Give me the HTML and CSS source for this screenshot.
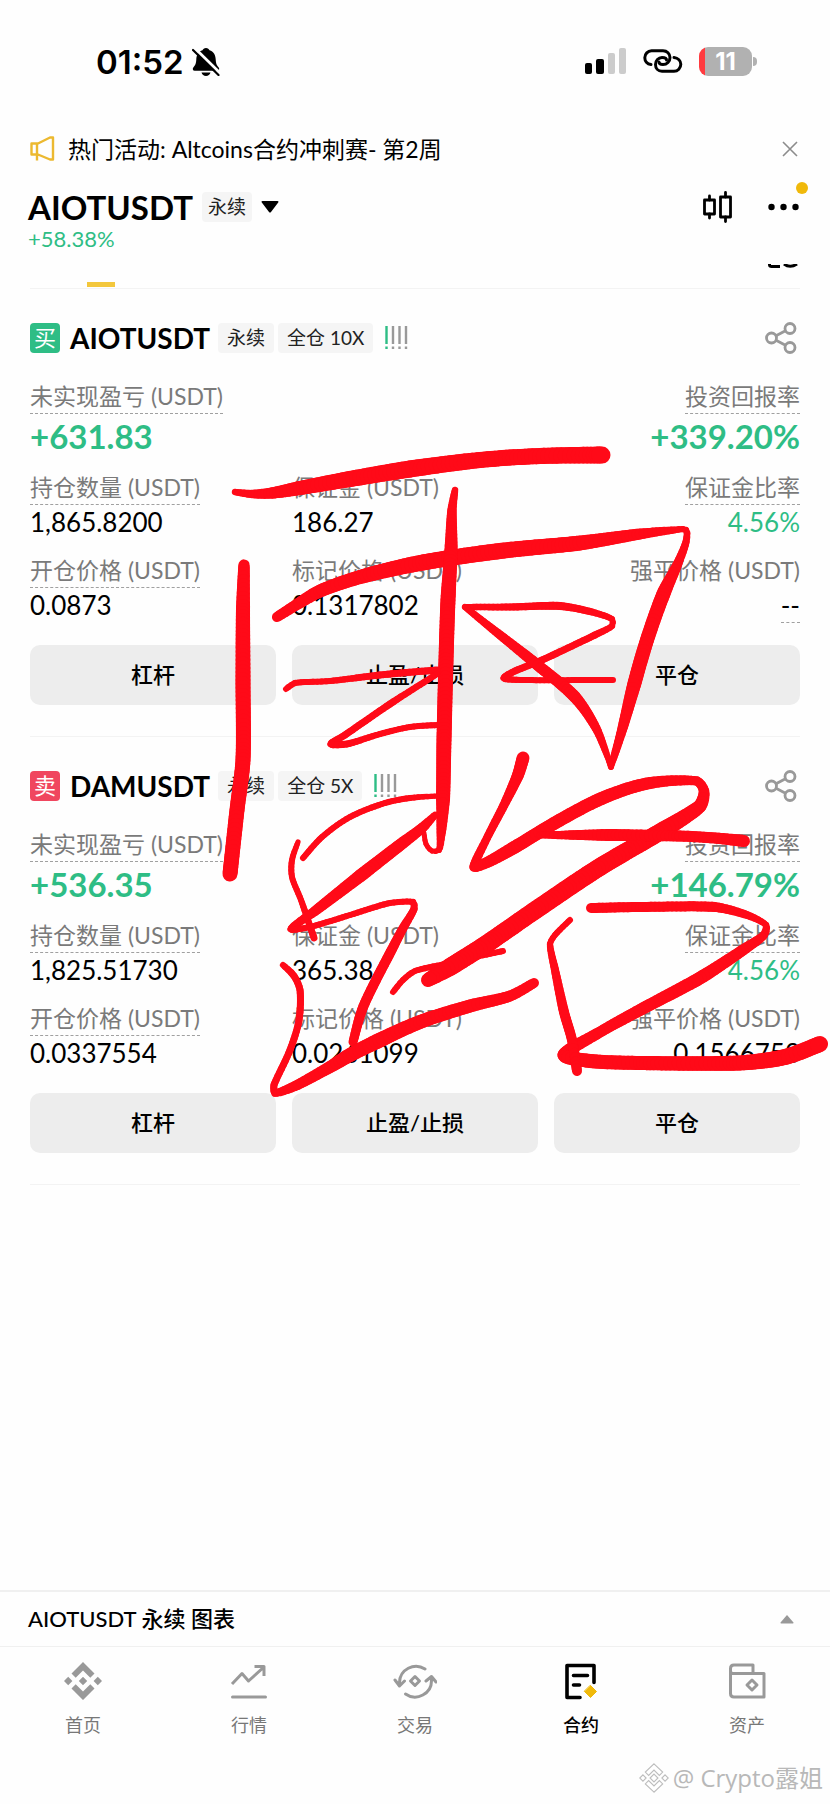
FILE: index.html
```html
<!DOCTYPE html>
<html lang="zh-CN">
<head>
<meta charset="utf-8">
<meta name="viewport" content="width=device-width, initial-scale=1">
<title>AIOTUSDT 永续</title>
<link rel="stylesheet" href="styles.css">
</head>
<body>
<div class="screen">
  <div class="status">
    <div class="status-time">
      <span>01:52</span>
      <svg width="28" height="28" viewBox="0 0 28 28" aria-hidden="true">
        <path d="M14 0c1.800 0 3 1 3.500 2.300 4 1.400 6 4.500 6.200 9 .2 5 1.300 6.300 3 8.200 1 1.200.6 3.300-1.400 3.300H2.700c-2 0-2.400-2.100-1.400-3.300 1.700-1.900 2.800-3.200 3-8.200.2-4.500 2.200-7.600 6.200-9C11 1 12.200 0 14 0zM9.500 24.500h9c-.6 2.200-2.300 3.500-4.500 3.500s-3.900-1.300-4.500-3.500z"/>
        <path d="M2.500 0L28 25" stroke="#fff" stroke-width="3"/>
        <path d="M1 2L26.500 27" stroke="#000" stroke-width="2.200" stroke-linecap="round"/>
      </svg>
    </div>
    <div class="status-icons">
      <svg width="42" height="28" viewBox="0 0 42 28" aria-hidden="true">
        <rect x="0" y="16" width="7" height="11" rx="2"/><rect x="11" y="12" width="8" height="15" rx="2"/>
        <rect x="23" y="6" width="7" height="21" rx="2" fill="#ccc"/><rect x="34" y="1" width="7" height="26" rx="2" fill="#ccc"/>
      </svg>
      <svg width="40" height="24" viewBox="0 0 40 24" fill="none" stroke="#000" stroke-width="3" stroke-linecap="round" aria-hidden="true">
        <path d="M8 15.500C4 15 1.800 12 1.800 8.800 1.800 5 4.800 1.800 8.500 1.800H20c4 0 7 3 7 6.800s-3 7-7 7c-2.200 0-4-1-4-2.600"/>
        <path d="M31 8.500c4 .5 6.800 3.500 6.800 6.800 0 3.800-3 7-6.800 7H19c-4 0-6.500-3-6.500-6.800s3-7 6.500-7c2.500 0 4.500.8 4.500 2.500"/>
      </svg>
      <div class="battery"><span>11</span></div>
    </div>
  </div>

  <div class="notice">
    <svg width="26" height="26" viewBox="0 0 26 26" fill="none" stroke="#ecb930" stroke-width="2.400" stroke-linejoin="round" aria-hidden="true">
      <path d="M1.500 7.500h6.500L20 1.500h3v22h-3L8 18.500H1.500zM7 7.500v17"/>
    </svg>
    <p>热门活动: Altcoins合约冲刺赛- 第2周</p>
    <button class="icon-btn" type="button" aria-label="关闭">
      <svg width="16" height="16" viewBox="0 0 16 16" stroke="#8c8c8c" stroke-width="1.600"><path d="M1 1l14 14M15 1L1 15"/></svg>
    </button>
  </div>

  <header class="ticker">
    <div>
      <div class="ticker-name">
        <h1>AIOTUSDT</h1><span class="tag tag-large">永续</span>
        <button class="icon-btn" type="button" aria-label="选择合约">
          <svg width="18" height="12" viewBox="0 0 18 12"><path d="M1.500 0h15c1 0 1.300.9.700 1.600L10 11c-.6.700-1.400.7-2 0L.8 1.600C.2.900.5 0 1.500 0z"/></svg>
        </button>
      </div>
      <p class="ticker-change">+58.38%</p>
    </div>
    <div class="ticker-tools">
      <button class="icon-btn" type="button" aria-label="K线图">
        <svg width="30" height="32" viewBox="0 0 30 32" fill="none" stroke="#000" stroke-width="2.800" stroke-linecap="round" stroke-linejoin="round"><rect x="1.500" y="9" width="10" height="14"/><path d="M6.500 5v4M6.500 23v4M22.500 1.500V6M22.500 26v4.500"/><rect x="17.500" y="6" width="10" height="20"/></svg>
      </button>
      <button class="icon-btn more" type="button" aria-label="更多">
        <svg width="31" height="8" viewBox="0 0 31 8"><circle cx="3.500" cy="4" r="3.200"/><circle cx="15.500" cy="4" r="3.200"/><circle cx="27.500" cy="4" r="3.200"/></svg>
      </button>
    </div>
  </header>
  <div class="tabs">
    <svg class="tabs-icon" width="30" height="5" viewBox="0 0 30 5" fill="none" stroke="#000" stroke-width="3" aria-hidden="true"><path d="M1.500 0v.8q0 1.700 2 1.700H12M16 0q6 4.500 13 0"/></svg>
    <div class="tabs-mark"></div>
  </div>

  <main>
    <section class="card">
      <div class="card-head">
        <span class="side buy">买</span><h2>AIOTUSDT</h2><span class="tag">永续</span><span class="tag">全仓 10X</span>
        <svg class="risk" width="23" height="24" viewBox="0 0 23 24" stroke-width="2.400" stroke="#999" aria-hidden="true"><path stroke="#2ebd85" d="M1.500 0v18M1.500 20.500v2.500"/><path d="M8 0v18M8 20.500v2.500M14.500 0v18M14.500 20.500v2.500M21 0v18M21 20.500v2.500"/></svg>
        <button class="icon-btn share" type="button" aria-label="分享"><svg width="32" height="32" viewBox="0 0 32 32" fill="none" stroke="#999" stroke-width="2.800"><circle cx="6.500" cy="16" r="5"/><circle cx="25" cy="6.500" r="5"/><circle cx="25" cy="25.500" r="5"/><path d="M11 13.700l9.500-5M11 18.300l9.500 5"/></svg></button>
      </div>
      <div class="row row-big">
        <div><p class="label dotted">未实现盈亏 (USDT)</p><p class="value">+631.83</p></div>
        <div></div>
        <div><p class="label dotted">投资回报率</p><p class="value">+339.20%</p></div>
      </div>
      <div class="row">
        <div><p class="label dotted">持仓数量 (USDT)</p><p class="value">1,865.8200</p></div>
        <div><p class="label">保证金 (USDT)</p><p class="value">186.27</p></div>
        <div><p class="label dotted">保证金比率</p><p class="value up">4.56%</p></div>
      </div>
      <div class="row">
        <div><p class="label dotted">开仓价格 (USDT)</p><p class="value">0.0873</p></div>
        <div><p class="label">标记价格 (USDT)</p><p class="value">0.1317802</p></div>
        <div><p class="label">强平价格 (USDT)</p><p class="value dotted">--</p></div>
      </div>
      <div class="actions"><button type="button">杠杆</button><button type="button">止盈/止损</button><button type="button">平仓</button></div>
    </section>

    <section class="card">
      <div class="card-head">
        <span class="side sell">卖</span><h2>DAMUSDT</h2><span class="tag">永续</span><span class="tag">全仓 5X</span>
        <svg class="risk" width="23" height="24" viewBox="0 0 23 24" stroke-width="2.400" stroke="#999" aria-hidden="true"><path stroke="#2ebd85" d="M1.500 0v18M1.500 20.500v2.500"/><path d="M8 0v18M8 20.500v2.500M14.500 0v18M14.500 20.500v2.500M21 0v18M21 20.500v2.500"/></svg>
        <button class="icon-btn share" type="button" aria-label="分享"><svg width="32" height="32" viewBox="0 0 32 32" fill="none" stroke="#999" stroke-width="2.800"><circle cx="6.500" cy="16" r="5"/><circle cx="25" cy="6.500" r="5"/><circle cx="25" cy="25.500" r="5"/><path d="M11 13.700l9.500-5M11 18.300l9.500 5"/></svg></button>
      </div>
      <div class="row row-big">
        <div><p class="label dotted">未实现盈亏 (USDT)</p><p class="value">+536.35</p></div>
        <div></div>
        <div><p class="label dotted">投资回报率</p><p class="value">+146.79%</p></div>
      </div>
      <div class="row">
        <div><p class="label dotted">持仓数量 (USDT)</p><p class="value">1,825.51730</p></div>
        <div><p class="label">保证金 (USDT)</p><p class="value">365.38</p></div>
        <div><p class="label dotted">保证金比率</p><p class="value up">4.56%</p></div>
      </div>
      <div class="row">
        <div><p class="label dotted">开仓价格 (USDT)</p><p class="value">0.0337554</p></div>
        <div><p class="label">标记价格 (USDT)</p><p class="value">0.0261099</p></div>
        <div><p class="label">强平价格 (USDT)</p><p class="value">0.1566753</p></div>
      </div>
      <div class="actions"><button type="button">杠杆</button><button type="button">止盈/止损</button><button type="button">平仓</button></div>
    </section>
  </main>

  <footer>
    <button class="chart-bar" type="button">
      <span>AIOTUSDT 永续 图表</span>
      <svg width="14" height="9" viewBox="0 0 14 9" fill="#999" aria-hidden="true"><path d="M7 0l6.500 7.500q.3 1-.8 1H1.300q-1.100 0-.8-1z"/></svg>
    </button>
    <nav>
      <a href="#home">
        <svg width="38" height="38" viewBox="0 0 38 38" fill="#999" aria-hidden="true"><path d="M19 0l11.500 11.500-4.200 4.200L19 8.400l-7.300 7.300-4.200-4.200zM19 38L7.500 26.500l4.200-4.200 7.300 7.300 7.300-7.300 4.200 4.200zM4.200 14.800L8.400 19l-4.200 4.200L0 19zM33.800 14.800L38 19l-4.200 4.200-4.200-4.200zM19 14.800l4.200 4.200-4.200 4.200-4.200-4.200z"/></svg>
        首页</a>
      <a href="#markets">
        <svg width="38" height="38" viewBox="0 0 38 38" fill="none" stroke="#999" stroke-width="3" aria-hidden="true"><path stroke-linecap="round" d="M2.500 35h33"/><path stroke-linejoin="round" d="M2 22l10-10.500 6.500 7.500L34 5M24.500 4.500H34V14"/></svg>
        行情</a>
      <a href="#trade">
        <svg width="44" height="38" viewBox="0 0 44 38" fill="none" stroke="#999" stroke-width="3" stroke-linecap="round" stroke-linejoin="round" aria-hidden="true"><path d="M32 7A16.500 16.500 0 0 0 6.500 20.500M2 18l4.500 6 5-5M12.500 32A16.500 16.500 0 0 0 38.500 18M33 19l5.500-4.500L43 20"/><path d="M22 14.500l4.500 4.500-4.500 4.500-4.500-4.500z"/></svg>
        交易</a>
      <a href="#futures" class="current" aria-current="page">
        <svg width="38" height="38" viewBox="0 0 38 38" fill="none" stroke="#000" stroke-width="3.600" stroke-linecap="round" stroke-linejoin="round" aria-hidden="true"><path d="M18 35.500H5V3.500h27v17M11.500 13.500h14M11.500 23h6"/><path d="M28.500 23.500l6 6-6 6-6-6z" fill="#f0b90b" stroke="#f0b90b" stroke-width="1"/></svg>
        合约</a>
      <a href="#assets">
        <svg width="38" height="38" viewBox="0 0 38 38" fill="none" stroke="#999" stroke-width="3" stroke-linejoin="round" aria-hidden="true"><path d="M2.500 11V6.500q0-3.500 3.500-3.500H25v8M2.500 9q0 2.500 2.500 2.500h31V35H6q-3.500 0-3.500-3.500z"/><path d="M24 18l5 5-5 5-5-5z"/></svg>
        资产</a>
    </nav>
    <div class="credit">
      <svg width="30" height="30" viewBox="0 0 38 38" fill="#fff" stroke="#bdbdbd" stroke-width="1.400" aria-hidden="true"><path d="M19 1l11 10.500-4.200 4.200L19 8.900l-6.800 6.800L8 11.500zM19 37L8 26.500l4.200-4.200 6.800 6.800 6.800-6.800 4.200 4.200zM5 15l4 4-4 4-4-4zM33 15l4 4-4 4-4-4zM19 14l5 5-5 5-5-5z"/></svg>
      <span>@ Crypto露姐</span>
    </div>
  </footer>
  <svg class="ink" viewBox="0 0 830 1804" aria-hidden="true"></svg>
</div>
<script src="ink.js"></script>
</body>
</html>
```

FILE: styles.css
```css
* { box-sizing: border-box; }
body {
  margin: 0;
  background: #fefefe;
  color: #000;
  font-family: Lato, "Noto Sans CJK SC", sans-serif;
  font-size: 22px;
  line-height: 30px;
}
h1, h2, p { margin: 0; }
button { font: inherit; color: inherit; border: 0; padding: 0; cursor: pointer; }
svg { display: block; flex: none; }
.icon-btn { background: none; }

.screen { position: relative; display: flex; flex-direction: column; min-height: 100vh; }
.ink { position: absolute; top: 0; left: 0; width: 100%; pointer-events: none; stroke: #ff0a18; stroke-linecap: round; }

.status { display: flex; justify-content: space-between; padding: 42px 78px 0 96px; }
.status-time { display: flex; align-items: center; gap: 8px; height: 40px; font: 600 33px/40px Inter, sans-serif; }
.status-icons { display: flex; align-items: center; gap: 16px; height: 38px; }
.battery {
  position: relative;
  width: 53px;
  height: 29px;
  border-radius: 9px;
  background: linear-gradient(90deg, #ff3b3f 6px, #b1b1b1 6px);
  color: #fff;
  font: 700 24px/29px Inter, sans-serif;
  text-align: center;
}
.battery::after { content: ""; position: absolute; left: 54px; top: 10px; width: 4px; height: 9px; border-radius: 0 4px 4px 0; background: #b1b1b1; }

.notice { display: flex; align-items: center; gap: 12px; padding: 52px 32px 0 30px; }
.notice p { flex: 1; font-size: 23px; }

.ticker { display: flex; justify-content: space-between; padding: 26px 31px 0 28px; }
.ticker-name { display: flex; align-items: center; gap: 9px; height: 34px; }
.ticker-name h1 { font-size: 33px; line-height: 34px; }
.ticker-change { font-size: 22px; line-height: 30px; color: #2ebd85; }
.ticker-tools { display: flex; align-items: center; gap: 35px; height: 34px; }
.more { position: relative; }
.more::after { content: ""; position: absolute; right: -9px; top: -21px; width: 12px; height: 12px; border-radius: 50%; background: #f0b90b; }
.tag { padding: 0 9px; border-radius: 4px; background: #f5f5f5; color: #222; font-size: 19px; line-height: 30px; white-space: nowrap; }
.tag-large { padding: 0 6px; }

.tabs { margin: 10px 30px 0; border-bottom: 1px solid #f3f3f3; }
.tabs-icon { margin-left: auto; margin-right: 2px; }
.tabs-mark { width: 28px; height: 5px; margin: 13px 0 1px 57px; background: #f3c73c; }

.card { margin: 0 30px; padding: 34px 0 31px; border-bottom: 1px solid #f3f3f3; }
.card-head { display: flex; align-items: center; gap: 4px; height: 30px; }
.side { width: 30px; border-radius: 4px; color: #fff; text-align: center; }
.buy { background: #2ebd85; }
.sell { background: #f0465f; }
.card-head h2 { margin: 0 4px 0 6px; font-size: 28px; line-height: 30px; }
.risk { margin-left: 8px; }
.share { margin-left: auto; margin-right: 3px; }

.row { display: grid; grid-template-columns: repeat(3, 1fr); column-gap: 16px; margin-top: 18px; }
.row > div { display: flex; flex-direction: column; align-items: flex-start; gap: 2px; }
.row > div:last-child { align-items: flex-end; }
.label { color: #7a7a7a; height: 33px; font-size: 23px; white-space: nowrap; }
.value { font-size: 26px; }
.dotted { padding-bottom: 2px; border-bottom: 1px dashed #a0a0a0; }
.up, .row-big .value { color: #2ebd85; }
.row-big { margin: 28px 0 18px; }
.row-big > div { gap: 4px; }
.row-big .value { font-size: 33px; line-height: 36px; font-weight: 700; }

.actions { display: grid; grid-template-columns: repeat(3, 1fr); gap: 16px; margin-top: 25px; }
.actions button { height: 60px; border-radius: 10px; background: #ededed; font-weight: 500; }
.row:has(+ .actions) { height: 65px; }

footer { margin-top: auto; }
.chart-bar {
  display: flex;
  align-items: center;
  justify-content: space-between;
  width: 100%;
  height: 56px;
  padding: 0 36px 0 28px;
  border-top: 2px solid #f0f0f0;
  background: #fefefe;
  font-weight: 500;
}
nav { display: grid; grid-template-columns: repeat(5, 1fr); padding-top: 15px; border-top: 1px solid #f0f0f0; }
nav a { display: flex; flex-direction: column; align-items: center; gap: 10px; color: #777; font-size: 18px; line-height: 30px; text-decoration: none; }
nav .current { color: #000; font-weight: 500; }
.credit { display: flex; align-items: center; justify-content: flex-end; gap: 4px; padding: 22px 7px 11px 0; color: #b8b8b8; font: 24px/31px "Open Sans", "Noto Sans CJK SC", sans-serif; }
```

FILE: ink.js
```js
// Each brush stroke is a list of x, y, width samples.
const strokes = [
  [[235,492,5],[252,494,7],[272,493,10],[300,488,13],[350,479,15],[410,469,16],[480,460,15],[540,456,15],[602,455,16]],
  [[244,565,10],[243,610,13],[243,680,14],[243,760,14],[237,810,14],[230,874,14]],
  [[277,617,9],[296,605,10],[320,591,12],[360,577,13],[420,563,15],[500,551,15],[580,543,14],[640,534,10],[674,530,6],[686,530,5],[686,542,6],[678,563,8],[663,595,13],[647,640,13],[634,685,13],[622,730,9],[613,760,6],[611,767,5]],
  [[455,490,5],[452,510,8],[451,550,12],[448,600,14],[446,660,14],[444,740,14],[443,800,13],[441,835,8],[439,850,5],[432,851,4],[426,844,4],[424,833,4]],
  [[465,607,5],[510,607,6],[560,606,7],[592,612,6],[612,619,5],[612,626,5],[595,635,6],[540,661,6],[515,671,6],[504,678,6],[520,680,5],[613,680,5]],
  [[465,607,5],[490,627,7],[535,663,10],[575,697,11],[596,728,8],[608,758,5],[611,767,5]],
  [[286,689,5],[295,683,5],[330,681,5],[380,675,6],[437,670,6]],
  [[437,674,5],[390,704,6],[345,735,6],[331,744,6],[347,744,6],[380,734,5],[410,727,5],[437,725,5]],
  [[303,858,5],[322,837,5],[350,817,5],[385,803,5],[410,798,5],[437,796,4]],
  [[298,842,4],[292,860,5],[292,877,5],[301,900,5],[314,938,6]],
  [[435,815,5],[422,828,9],[400,845,11],[360,876,12],[315,911,9],[291,929,6],[310,927,5],[350,915,5],[390,903,5],[413,902,5],[414,909,6],[402,930,8],[389,955,9],[376,980,9],[362,1010,9],[353,1042,8]],
  [[283,965,5],[294,976,6],[300,990,6],[299,1020,6],[290,1050,6],[274,1085,6],[275,1093,6],[295,1086,9],[330,1067,11],[350,1055,13],[380,1040,14],[420,1022,13],[470,1006,12],[510,996,10],[534,983,9]],
  [[393,992,5],[403,980,5],[415,971,5],[445,964,5],[475,957,5],[503,951,5]],
  [[523,758,12],[518,775,11],[504,805,8],[487,838,7],[474,867,8],[488,862,10],[515,847,12],[560,820,12],[605,797,12],[650,783,11],[697,781,8],[704,791,9],[700,806,12],[660,832,16],[600,867,17],[540,907,17],[485,945,17],[450,967,17],[428,980,13]],
  [[540,835,5],[570,835,8],[610,835,11],[680,836,10],[715,838,10],[744,841,11]],
  [[591,908,9],[640,907,9],[715,907,9],[747,915,7],[766,925,5],[764,935,7],[743,950,10],[700,978,12],[640,1010,11],[600,1032,10],[564,1055,12],[590,1061,13],[640,1063,13],[740,1063,14],[785,1057,15],[820,1044,15]],
  [[570,920,5],[555,935,5],[550,944,5],[555,970,7],[564,1012,9],[572,1040,9],[577,1071,9]]
];

const ink = document.querySelector('.ink');
const ns = 'http://www.w3.org/2000/svg';
const curve = (a, b, c, d, t) =>
  (2 * b + (c - a) * t + (2 * a - 5 * b + 4 * c - d) * t * t + (3 * b - a - 3 * c + d) * t * t * t) / 2;

for (const s of strokes) {
  let last = s[0];
  for (let i = 0; i < s.length - 1; i++) {
    const a = s[Math.max(i - 1, 0)], b = s[i], c = s[i + 1], d = s[Math.min(i + 2, s.length - 1)];
    const span = Math.hypot(c[0] - b[0], c[1] - b[1]);
    // Long neighbours are pulled in so that tight corners do not overshoot.
    const near = (p, q) => {
      const k = Math.min(1, span / (Math.hypot(p[0] - q[0], p[1] - q[1]) || 1));
      return [q[0] + (p[0] - q[0]) * k, q[1] + (p[1] - q[1]) * k];
    };
    const a2 = near(a, b), d2 = near(d, c);
    const steps = Math.max(2, Math.ceil(span / 4));
    for (let j = 1; j <= steps; j++) {
      const t = j / steps;
      const p = [curve(a2[0], b[0], c[0], d2[0], t), curve(a2[1], b[1], c[1], d2[1], t), b[2] + (c[2] - b[2]) * t];
      const line = document.createElementNS(ns, 'line');
      line.setAttribute('x1', last[0]);
      line.setAttribute('y1', last[1]);
      line.setAttribute('x2', p[0]);
      line.setAttribute('y2', p[1]);
      line.setAttribute('stroke-width', p[2] + 1);
      ink.appendChild(line);
      last = p;
    }
  }
}
```
